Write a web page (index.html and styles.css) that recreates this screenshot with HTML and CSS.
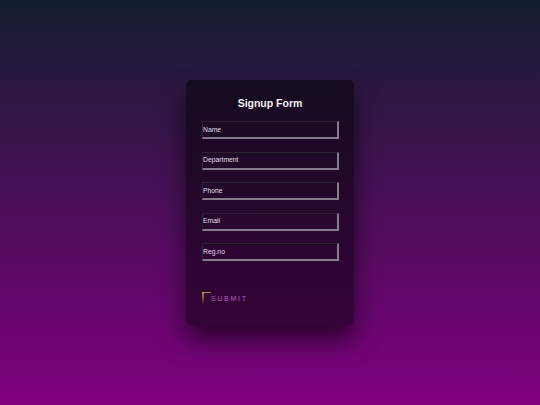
FILE: index.html
```html
<!DOCTYPE html>
<html>
<head>
<meta charset="utf-8">
<link rel="stylesheet" href="styles.css">
</head>
<body>
<div class="page">
  <form class="card">
    <h2 class="title">Signup Form</h2>
    <div class="field"><span class="label">Name</span></div>
    <div class="field"><span class="label">Department</span></div>
    <div class="field"><span class="label">Phone</span></div>
    <div class="field"><span class="label">Email</span></div>
    <div class="field"><span class="label">Reg.no</span></div>
    <div class="actions">
      <span class="submit">SUBMIT</span>
    </div>
  </form>
</div>
</body>
</html>
```
FILE: styles.css
```css
html, body {
  margin: 0;
  padding: 0;
}
body {
  width: 540px;
  height: 405px;
  background: linear-gradient(#141e30, #800080);
  font-family: "Liberation Sans", Arial, sans-serif;
}
.page {
  height: 405px;
  display: flex;
  align-items: center;
  justify-content: center;
}
.card {
  width: 136px;
  height: 229px;
  padding: 16px 16px 0 16px;
  background: rgba(0, 0, 0, 0.5);
  border-radius: 5px;
  box-shadow: 0 15px 25px rgba(0, 0, 0, 0.6);
  display: flex;
  flex-direction: column;
}
.title {
  margin: 0 0 11px 0;
  font-size: 10.5px;
  line-height: 14px;
  font-weight: bold;
  color: #f2eef4;
  text-align: center;
}
.field {
  box-sizing: border-box;
  width: 137px;
  height: 18px;
  margin-bottom: 12.5px;
  border-style: solid;
  border-width: 1px 2px 2px 1px;
  border-color: #2c2232 #857a8e #857a8e #2c2232;
  padding: 0;
}
.label {
  display: block;
  font-size: 6.8px;
  line-height: 9px;
  margin-top: 2.5px;
  color: #e4dce8;
}
.actions {
  margin-top: 13px;
}
.submit {
  position: relative;
  display: inline-block;
  padding: 3px 0 3px 9px;
  font-size: 7px;
  line-height: 8px;
  letter-spacing: 1.7px;
  color: #b461c4;
}
.submit::before {
  content: "";
  position: absolute;
  left: 0;
  top: 0;
  width: 9px;
  height: 1.5px;
  background: linear-gradient(90deg, #c98d45, #a8743a);
}
.submit::after {
  content: "";
  position: absolute;
  left: 0;
  top: 0;
  width: 1.5px;
  height: 13px;
  background: linear-gradient(#c98d45, rgba(201, 141, 69, 0));
}
```
